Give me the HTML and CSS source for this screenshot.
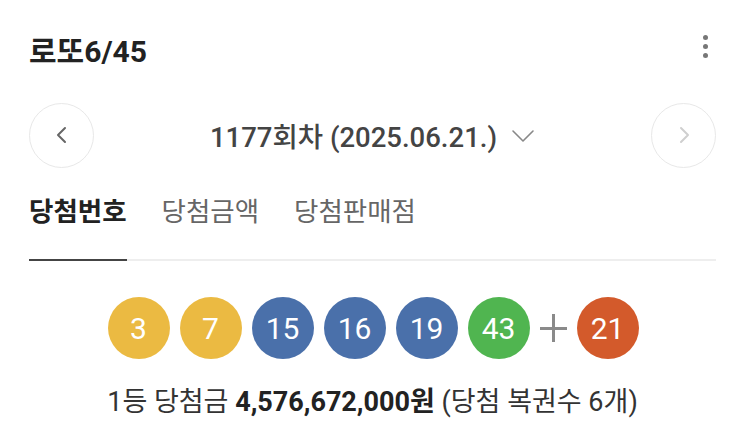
FILE: index.html
```html
<!DOCTYPE html>
<html lang="ko">
<head>
<meta charset="utf-8">
<title>로또6/45</title>
<link rel="stylesheet" href="styles.css">
</head>
<body>
<div class="page">
  <header class="top">
    <h1 class="title">로또6/45</h1>
    <div class="kebab"><span></span><span></span><span></span></div>
  </header>

  <div class="nav">
    <div class="circle prev">
      <svg width="14" height="18" viewBox="0 0 14 18"><path d="M10 2 L3 9 L10 16" fill="none" stroke="#666" stroke-width="2" stroke-linecap="round" stroke-linejoin="round"/></svg>
    </div>
    <div class="round">
      <span>1177회차 (2025.06.21.)</span>
      <svg class="down" width="24" height="14" viewBox="0 0 24 14"><path d="M2 2 L12 12 L22 2" fill="none" stroke="#888" stroke-width="1.6" stroke-linecap="round" stroke-linejoin="round"/></svg>
    </div>
    <div class="circle next">
      <svg width="14" height="18" viewBox="0 0 14 18"><path d="M4 2 L11 9 L4 16" fill="none" stroke="#cfcfcf" stroke-width="2" stroke-linecap="round" stroke-linejoin="round"/></svg>
    </div>
  </div>

  <div class="tabs">
    <div class="tab active">당첨번호</div>
    <div class="tab">당첨금액</div>
    <div class="tab">당첨판매점</div>
  </div>

  <div class="balls">
    <div class="ball yellow">3</div>
    <div class="ball yellow">7</div>
    <div class="ball blue">15</div>
    <div class="ball blue">16</div>
    <div class="ball blue">19</div>
    <div class="ball green">43</div>
    <div class="plus"></div>
    <div class="ball red">21</div>
  </div>

  <p class="prize">1등 당첨금 <b>4,576,672,000원</b> (당첨 복권수 6개)</p>
</div>
</body>
</html>
```

FILE: styles.css
```css
* { box-sizing: border-box; }
html, body {
  margin: 0;
  padding: 0;
  background: #fff;
}
body {
  font-family: "Roboto", "Noto Sans CJK KR", sans-serif;
  color: #222;
}
.page {
  width: 743px;
  padding: 0 27px 0 29px;
}
.top {
  height: 103px;
  display: flex;
  align-items: center;
  justify-content: space-between;
}
.title {
  margin: 0;
  font-size: 30px;
  font-weight: 700;
  color: #222;
  line-height: 1;
  padding-left: 0;
}
.kebab {
  display: flex;
  flex-direction: column;
  gap: 4px;
  margin-right: 8px;
  margin-top: -10px;
}
.kebab span {
  width: 5px;
  height: 5px;
  border-radius: 50%;
  background: #777;
}
.nav {
  height: 64px;
  display: flex;
  align-items: center;
  justify-content: space-between;
}
.circle {
  width: 65px;
  height: 65px;
  border-radius: 50%;
  border: 1.5px solid #e8e8e8;
  display: flex;
  align-items: center;
  justify-content: center;
}
.round {
  display: flex;
  align-items: center;
  gap: 14px;
  font-size: 27.5px;
  font-weight: 500;
  color: #444;
}
.round .down { margin-top: 2px; }
.tabs {
  display: flex;
  gap: 35px;
  border-bottom: 2px solid #eeeeee;
}
.tab {
  font-size: 26.5px;
  line-height: 36px;
  padding: 27px 0 29px;
  color: #666;
  margin-bottom: -2px;
  border-bottom: 2px solid transparent;
}
.tab.active {
  color: #222;
  font-weight: 700;
  border-bottom-color: #444;
}
.balls {
  display: flex;
  justify-content: center;
  align-items: center;
  gap: 10px;
  margin-top: 36px;
  padding-left: 1px;
}
.ball {
  width: 62px;
  height: 62px;
  border-radius: 50%;
  display: flex;
  align-items: center;
  justify-content: center;
  color: #fff;
  font-size: 30px;
  font-weight: 400;
}
.yellow { background: #ebba42; }
.blue { background: #4a70aa; }
.green { background: #50b550; }
.red { background: #d35a2b; }
.plus {
  position: relative;
  width: 27px;
  height: 28px;
}
.plus::before, .plus::after {
  content: "";
  position: absolute;
  background: #8a8a8a;
}
.plus::before {
  left: 0; right: 0;
  top: 12.5px;
  height: 3px;
}
.plus::after {
  top: 0; bottom: 0;
  left: 12px;
  width: 3px;
}
.prize {
  margin: 26px 0 0;
  text-align: center;
  font-size: 27px;
  line-height: 34px;
  color: #333;
}
.prize b {
  font-weight: 700;
  color: #222;
}
```
